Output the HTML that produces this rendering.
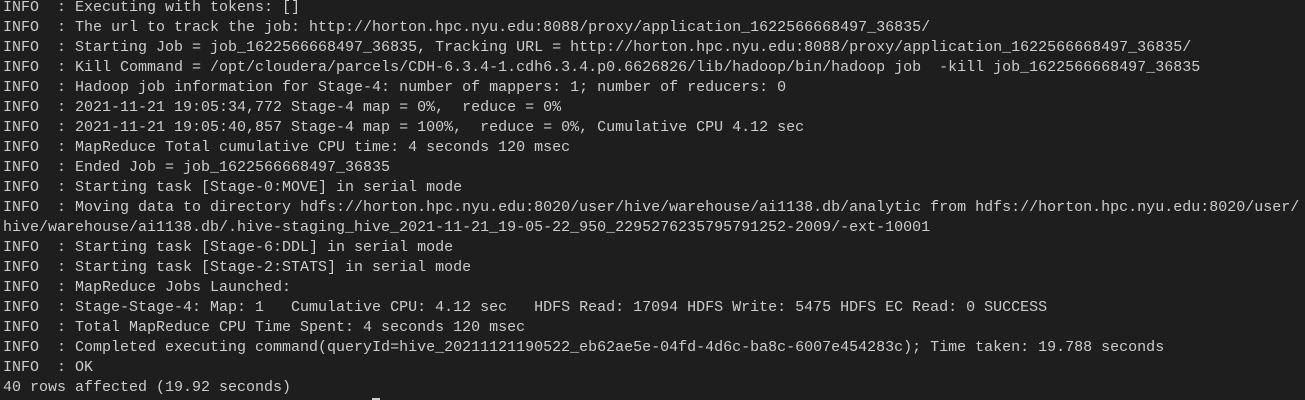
<!DOCTYPE html>
<html><head><style>
html,body{margin:0;padding:0;background:#1e1e1e;width:1305px;height:400px;overflow:hidden;position:relative}
pre{margin:0;position:absolute;left:3px;top:-2px;font-family:"Liberation Mono",monospace;font-size:15px;line-height:20px;color:#cccccc;white-space:pre}
.c{display:inline-block;width:8px;height:18px;background:#cccccc;vertical-align:top}
</style></head><body><pre>INFO  : Executing with tokens: []
INFO  : The url to track the job: http://horton.hpc.nyu.edu:8088/proxy/application_1622566668497_36835/
INFO  : Starting Job = job_1622566668497_36835, Tracking URL = http://horton.hpc.nyu.edu:8088/proxy/application_1622566668497_36835/
INFO  : Kill Command = /opt/cloudera/parcels/CDH-6.3.4-1.cdh6.3.4.p0.6626826/lib/hadoop/bin/hadoop job  -kill job_1622566668497_36835
INFO  : Hadoop job information for Stage-4: number of mappers: 1; number of reducers: 0
INFO  : 2021-11-21 19:05:34,772 Stage-4 map = 0%,  reduce = 0%
INFO  : 2021-11-21 19:05:40,857 Stage-4 map = 100%,  reduce = 0%, Cumulative CPU 4.12 sec
INFO  : MapReduce Total cumulative CPU time: 4 seconds 120 msec
INFO  : Ended Job = job_1622566668497_36835
INFO  : Starting task [Stage-0:MOVE] in serial mode
INFO  : Moving data to directory hdfs://horton.hpc.nyu.edu:8020/user/hive/warehouse/ai1138.db/analytic from hdfs://horton.hpc.nyu.edu:8020/user/
hive/warehouse/ai1138.db/.hive-staging_hive_2021-11-21_19-05-22_950_2295276235795791252-2009/-ext-10001
INFO  : Starting task [Stage-6:DDL] in serial mode
INFO  : Starting task [Stage-2:STATS] in serial mode
INFO  : MapReduce Jobs Launched:
INFO  : Stage-Stage-4: Map: 1   Cumulative CPU: 4.12 sec   HDFS Read: 17094 HDFS Write: 5475 HDFS EC Read: 0 SUCCESS
INFO  : Total MapReduce CPU Time Spent: 4 seconds 120 msec
INFO  : Completed executing command(queryId=hive_20211121190522_eb62ae5e-04fd-4d6c-ba8c-6007e454283c); Time taken: 19.788 seconds
INFO  : OK
40 rows affected (19.92 seconds)
0: jdbc:hive2://hm-1.hpc.nyu.edu:10000/> <span class="c"></span></pre></body></html>
